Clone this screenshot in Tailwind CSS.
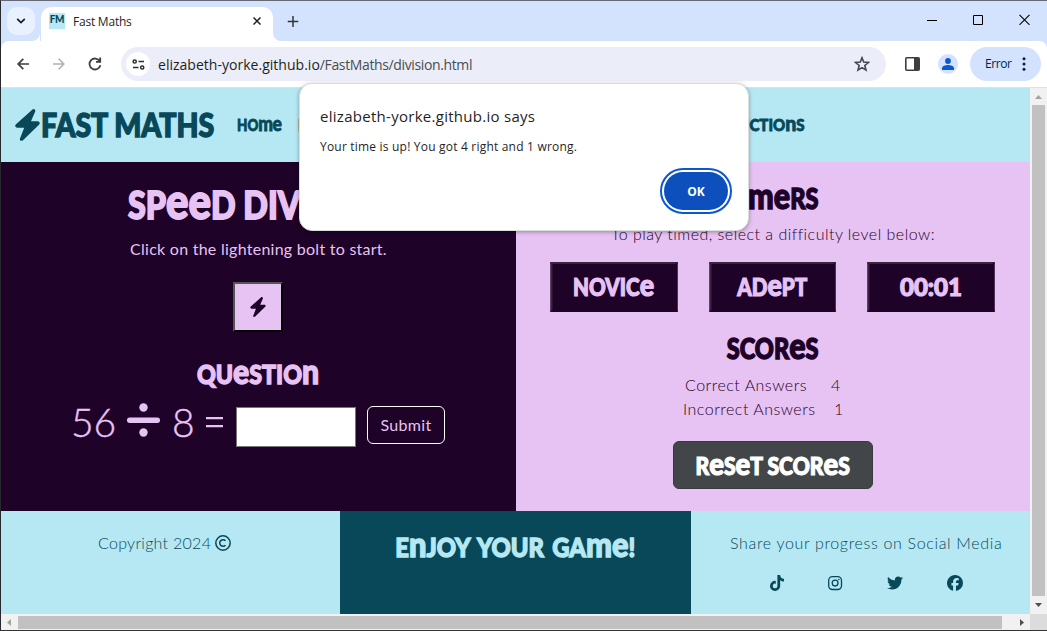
<!DOCTYPE html>
<html lang="en"><head><meta charset="utf-8"><title>Fast Maths</title>
<script src="https://cdn.jsdelivr.net/npm/@tailwindcss/browser@4"></script></head>
<body class="w-[1047px] h-[631px] overflow-hidden bg-white font-['Open_Sans',sans-serif] text-[#1f1f1f]">
<div class="relative w-[1047px] h-[631px] flex flex-col border-t border-t-[#666874] border-l border-l-[#26292e] border-b border-b-[#333] whitespace-nowrap overflow-hidden">
  <!-- Tab strip -->
  <div class="h-10 shrink-0 bg-[#d3e3fd] flex">
    <div class="w-7 h-7 mt-1.5 ml-1.5 rounded-[10px] bg-[#e9f1fe] flex items-center justify-center shrink-0">
      <svg width="10" height="6" viewBox="0 0 10 6" fill="none" stroke="#1f1f1f" stroke-width="1.8"><path d="M1.2 .8 5 4.6 8.8.8"/></svg>
    </div>
    <svg class="w-2 h-2 self-end shrink-0 -ml-1 translate-x-px" viewBox="0 0 8 8"><path d="M8 0v8H0a8 8 0 0 0 8-8" fill="#fff"/></svg>
    <div class="w-[232px] -ml-px translate-x-[3px] h-[34px] mt-1.5 rounded-t-[10px] bg-white flex items-center shrink-0">
      <div class="w-4 h-4 ml-2 bg-[#b6e8f5] mb-1.5 flex items-center justify-center font-['Lato',sans-serif] font-black text-[11px] tracking-[-0.5px] text-[#084859]"><span class="-mt-1 scale-x-90">FM</span></div>
      <span class="ml-2 mb-[5px] text-[12px] tracking-[-0.22px]">Fast Maths</span>
      <svg class="ml-auto mr-3 mb-1.5" width="8" height="8" viewBox="0 0 8 8" stroke="#1f1f1f" stroke-width="1.5"><path d="M.5.5l7 7M7.500.5l-7 7"/></svg>
    </div>
    <svg class="w-2 h-2 self-end shrink-0 translate-x-[3px]" viewBox="0 0 8 8"><path d="M0 0v8h8a8 8 0 0 1-8-8" fill="#fff"/></svg>
    <svg class="ml-[10px] mt-[15px] -translate-x-[0.5px]" width="11" height="11" viewBox="0 0 11 11" stroke="#333" stroke-width="1.5"><path d="M5.500 0v11M0 5.500h11"/></svg>
    <div class="ml-auto mr-[17px] mt-[13px] flex gap-9">
      <svg width="10" height="11" viewBox="0 0 10 11" stroke="#000"><path d="M0 6.500h10"/></svg>
      <svg width="10" height="11" viewBox="0 0 10 11" stroke="#000" fill="none"><path d="M.5 1.500h9v9h-9z"/></svg>
      <svg width="11" height="11" viewBox="0 0 11 11" stroke="#000" stroke-width="1.100"><path d="M.5.8l10 10M10.500.8l-10 10"/></svg>
    </div>
  </div>
  <!-- Toolbar -->
  <div class="bg-[#d3e3fd] shrink-0">
  <div class="h-[47px] bg-white rounded-t-[8px] border-b border-[#dfe1e5] flex items-center">
    <svg class="ml-4" width="12" height="12" viewBox="0 0 12 12" fill="none" stroke="#3c3f42" stroke-width="1.700"><path d="M12 6H1.200M6.300.8 1.200 6l5.100 5.200"/></svg>
    <svg class="ml-6" width="12" height="12" viewBox="0 0 12 12" fill="none" stroke="#b0b2b5" stroke-width="1.600"><path d="M0 6h10.800M5.700.8 10.800 6l-5.100 5.200"/></svg>
    <svg class="ml-[23px]" width="14" height="14" viewBox="0 0 14 14" fill="none" stroke="#3c3f42" stroke-width="1.800"><path d="M11.800 4.200A5.500 5.500 0 1 0 12.400 8.300M12.200.5v4.300H8"/></svg>
    <div class="ml-[19px] w-[765px] h-[34px] rounded-full bg-[#ebeef8] flex items-center shrink-0">
      <div class="ml-[5px] w-6 h-6 rounded-full bg-white flex items-center justify-center">
        <svg width="13" height="11" viewBox="0 0 13 11" fill="none" stroke="#2d2f31" stroke-width="1.500"><circle cx="2.700" cy="2.500" r="1.600"/><path d="M6.500 2.500H12M1 8.500h5.500"/><circle cx="10.200" cy="8.500" r="1.600"/></svg>
      </div>
      <span class="ml-2 text-[14px] tracking-[-0.37px] [word-spacing:0]"><span class="tracking-[0.02px]">elizabeth-yorke.github.io</span><span class="text-[#4a4d51]">/FastMaths/division.html</span></span>
      <svg class="ml-auto mr-4" width="16" height="16" viewBox="0 0 16 16" fill="none" stroke="#44474a" stroke-width="1.600"><path d="m8 1.800 1.700 4.300 4.700.4-3.600 3 1.200 4.600-4-2.500-4 2.500 1.200-4.600-3.600-3 4.700-.4z"/></svg>
    </div>
    <svg class="ml-[19px] shrink-0" width="15" height="14" viewBox="0 0 15 14"><rect x=".8" y=".8" width="13.400" height="12.400" rx="1" fill="none" stroke="#3c3f42" stroke-width="1.600"/><path d="M9 1h5v12H9z" fill="#3c3f42"/></svg>
    <div class="ml-[18px] w-5 h-5 rounded-full bg-[#d3e3fd] flex items-center justify-center shrink-0">
      <svg width="12" height="12" viewBox="0 0 12 12" fill="#0b57d0"><circle cx="6" cy="3" r="2.900"/><path d="M0 12v-1.800C0 8 3.500 7 6 7s6 1 6 3.200V12z"/></svg>
    </div>
    <div class="ml-3 w-[71px] h-[34px] rounded-full bg-[#d3e3fd] flex items-center shrink-0 text-[12px] text-[#041e49]">
      <span class="ml-[15px] tracking-[-0.4px]">Error</span>
      <svg class="ml-auto mr-[15px]" width="4" height="14" viewBox="0 0 4 14" fill="#041e49"><circle cx="2" cy="1.800" r="1.500"/><circle cx="2" cy="7" r="1.500"/><circle cx="2" cy="12.200" r="1.500"/></svg>
    </div>
  </div></div>
  <!-- Page viewport -->
  <div class="flex h-[526px] shrink-0">
    <div class="w-[1029px] shrink-0 font-['Lato',sans-serif] font-light">
      <header class="h-[74px] bg-[#b6e8f4] text-[#084859] flex items-center font-black">
        <svg class="ml-[14px] shrink-0" width="25" height="32" viewBox="0 0 25 32" fill="#084859"><path d="M17.500.4c1.600-.9 3.300.5 2.700 2.200L16 12.200h6.600c2 0 2.800 2.200 1.400 3.500L8 31.200c-1.700 1.500-3.800.2-3-1.800L9.200 18.800H2.400C.3 18.800-.5 16.600 1 15.200z"/></svg>
        <span class="ml-px w-[172px] shrink-0 text-[32px]"><span class="inline-block origin-left scale-x-[0.89] [-webkit-text-stroke:1.4px]">FAST MATHS</span></span>
        <nav class="ml-[24px] w-[568px] flex justify-between text-[16px] uppercase leading-none [-webkit-text-stroke:0.8px]">
          <span class="flex"><span class="w-[61px]"><span class="inline-block origin-left scale-x-[0.84]">Ho<i class="not-italic normal-case text-[1.3em] leading-[0] tracking-[-0.5px]">me</i></span></span><span>Division</span></span>
          <span class="inline-block origin-right scale-x-[0.94]">Instructio<i class="not-italic normal-case text-[1.3em] leading-[0]">n</i>s</span>
        </nav>
      </header>
      <main class="h-[349px] flex">
        <section class="w-[515px] bg-[#1e0228] text-[#e7c3f3] flex flex-col items-center">
          <h1 class="mt-[21px] h-[42px] leading-[42px] font-black text-[38px] uppercase scale-x-[0.85] [-webkit-text-stroke:1.8px]">Sp<i class="not-italic normal-case text-[1.3em] leading-[0]">ee</i>d Division</h1>
          <p class="mt-[12px] h-6 leading-6 text-[16px] font-normal tracking-[0.26px]">Click on the lightening bolt to start.</p>
          <div class="mt-[21px] -translate-x-px w-[50px] h-[50px] border-2 border-t-[#555] border-l-[#555] border-b-black border-r-black bg-[#e7c3f3] flex items-center justify-center">
            <svg width="16" height="20" viewBox="0 0 25 32" fill="#1e0228"><path d="M17.500.4c1.600-.9 3.300.5 2.700 2.200L16 12.200h6.600c2 0 2.800 2.200 1.400 3.500L8 31.200c-1.700 1.500-3.800.2-3-1.800L9.200 18.800H2.400C.3 18.800-.5 16.600 1 15.200z"/></svg>
          </div>
          <h2 class="mt-[26px] h-8 leading-8 font-black text-[27px] uppercase scale-x-[0.86] [-webkit-text-stroke:1.4px]">Qu<i class="not-italic normal-case text-[1.3em] leading-[0]">e</i>stio<i class="not-italic normal-case text-[1.3em] leading-[0]">n</i></h2>
          <div class="mt-[17px] self-start ml-[70px] h-10 flex text-[39px] leading-[30px] [-webkit-text-stroke:0.4px]">
            <span class="w-[56px]">56</span>
            <svg class="-mt-1" width="33" height="34" viewBox="0 0 33 34" fill="#e7c3f3"><circle cx="16.500" cy="4.500" r="4.200"/><rect y="14.500" width="33" height="5.500" rx="2.700"/><circle cx="16.500" cy="29.500" r="4.200"/></svg>
            <span class="ml-[12px] w-[33px]">8</span>
            <svg class="mt-[9px]" width="19" height="13" viewBox="0 0 19 13" fill="#e7c3f3"><path d="M1 1h17v2.200H1zM1 9h17v2.200H1z"/></svg>
            <div class="ml-3 w-[120px] h-10 bg-white border border-[#767676]"></div>
            <div class="ml-[11px] -mt-px w-[78px] h-[38px] rounded-md border border-white text-[16px] leading-9 font-normal text-center tracking-[0.3px] [-webkit-text-stroke:0px]">Submit</div>
          </div>
        </section>
        <section class="w-[514px] bg-[#e7c3f3] text-[#1e0228] flex flex-col items-center">
          <h2 class="mt-5 h-8 leading-8 font-black text-[28px] uppercase scale-x-[0.84] [-webkit-text-stroke:1.4px]">Ti<i class="not-italic normal-case text-[1.3em] leading-[0]">me</i>rs</h2>
          <p class="mt-[8px] h-6 leading-6 text-[16px] tracking-[0.48px]">To play timed, select a difficulty level below:</p>
          <div class="mt-4 -translate-x-[0.5px] flex gap-[32px] h-[50px] font-black text-[24px] uppercase text-[#e7c3f3] [-webkit-text-stroke:1.2px]">
            <div class="w-[126.500px] border-2 border-t-[#3a233f] border-l-[#3a233f] border-r-[#1e0228] border-b-[#1e0228] bg-[#1e0228] text-center leading-[46px]"><span class="inline-block scale-x-[0.86]">Novic<i class="not-italic normal-case text-[1.3em] leading-[0]">e</i></span></div>
            <div class="w-[126.500px] border-2 border-t-[#3a233f] border-l-[#3a233f] border-r-[#1e0228] border-b-[#1e0228] bg-[#1e0228] text-center leading-[46px]"><span class="inline-block scale-x-[0.86]">Ad<i class="not-italic normal-case text-[1.3em] leading-[0]">e</i>pt</span></div>
            <div class="w-[126.500px] border-2 border-t-[#3a233f] border-l-[#3a233f] border-r-[#1e0228] border-b-[#1e0228] bg-[#1e0228] text-center leading-[46px]">00:01</div>
          </div>
          <h2 class="mt-5 h-8 leading-8 font-black text-[28px] uppercase scale-x-[0.84] [-webkit-text-stroke:1.4px]">Scor<i class="not-italic normal-case text-[1.3em] leading-[0]">e</i>s</h2>
          <div class="mt-[9px] h-6 leading-6 text-[16px] tracking-[0.5px] self-start ml-[169px] flex"><span class="w-[146px]">Correct Answers</span><span>4</span></div>
          <div class="h-6 leading-6 text-[16px] tracking-[0.5px] self-start ml-[167px] flex"><span class="w-[151px]">Incorrect Answers</span><span>1</span></div>
          <div class="mt-[20px] w-[200px] h-12 rounded-md bg-[#424649] border border-[#373b3e] text-white text-center leading-[47px] font-black text-[24px] uppercase [-webkit-text-stroke:1.2px]"><span class="inline-block scale-x-[0.88]">R<i class="not-italic normal-case text-[1.3em] leading-[0]">e</i>s<i class="not-italic normal-case text-[1.3em] leading-[0]">e</i>t Scor<i class="not-italic normal-case text-[1.3em] leading-[0]">e</i>s</span></div>
        </section>
      </main>
      <footer class="h-[103px] flex bg-[#b6e8f4] text-[#084859]">
        <div class="w-[339px] flex pt-5 pl-[97px] text-[16px] leading-6 tracking-[0.28px]"><span class="w-[117px]">Copyright 2024</span>
          <svg class="mt-1" width="16" height="16" viewBox="0 0 16 16" fill="none" stroke="#084859" stroke-width="1.500"><circle cx="8" cy="8" r="7.200"/><path d="M10.500 5.800a3.300 3.300 0 1 0 0 4.400"/></svg></div>
        <div class="w-[351px] bg-[#084859] text-[#b6e8f4] text-center pt-5 leading-8 font-black text-[27px] uppercase [-webkit-text-stroke:1.4px]"><span class="inline-block scale-x-[0.88] [word-spacing:3px]">E<i class="not-italic normal-case text-[1.3em] leading-[0]">n</i>joy your Ga<i class="not-italic normal-case text-[1.3em] leading-[0]">me</i>!</span></div>
        <div class="w-[339px] pt-5 pl-[39px]">
          <p class="text-[16px] leading-6 tracking-[0.66px]">Share your progress on Social Media</p>
          <div class="mt-5 ml-10 flex h-4">
            <svg width="14" height="16" viewBox="0 0 448 512" fill="#084859"><path d="M448 209.900a210.100 210.100 0 0 1-122.800-39.300v178.800A162.600 162.600 0 1 1 185 188.300v89.900a74.600 74.600 0 1 0 52.200 71.200V0h88a121.200 121.200 0 0 0 1.900 22.200 122.200 122.200 0 0 0 53.900 80.200 121.400 121.400 0 0 0 67 20.100z"/></svg>
            <svg class="ml-[43px]" width="16" height="16" viewBox="0 0 16 16" fill="none" stroke="#084859" stroke-width="1.300"><rect x="1.700" y="1.700" width="12.800" height="12.800" rx="3.700"/><circle cx="8.100" cy="8.100" r="2.900"/><circle cx="11.800" cy="4.400" r=".5" fill="#084859" stroke-width=".6"/></svg>
            <svg class="ml-11" width="16" height="16" viewBox="0 0 512 512" fill="#084859"><path d="M459.400 151.700c.3 4.500.3 9.100.3 13.600 0 138.700-105.600 298.600-298.600 298.600-59.500 0-114.700-17.200-161.100-47.100 8.400 1 16.600 1.300 25.300 1.300 49.100 0 94.200-16.600 130.300-44.800-46.100-1-84.800-31.200-98.100-72.800 6.500 1 13 1.600 19.800 1.600 9.400 0 18.800-1.300 27.600-3.600-48.100-9.700-84.100-52-84.100-103v-1.300c14 7.800 30.200 12.700 47.400 13.300-28.300-18.800-46.800-51-46.800-87.400 0-19.500 5.200-37.400 14.300-53 51.700 63.700 129.300 105.300 216.400 109.800-1.600-7.800-2.600-15.900-2.600-24 0-57.800 46.800-104.900 104.900-104.900 30.200 0 57.500 12.700 76.700 33.100 23.700-4.500 46.500-13.300 66.600-25.300-7.800 24.400-24.400 44.800-46.100 57.800 21.100-2.300 41.600-8.100 60.400-16.200-14.300 20.800-32.200 39.300-52.600 54.300z"/></svg>
            <svg class="ml-11" width="16" height="16" viewBox="0 0 512 512" fill="#084859"><path d="M512 256a256 256 0 1 0-317.800 248.400V334.200h-52.800V256h52.800v-33.700c0-87.100 39.400-127.500 125-127.500 16.200 0 44.200 3.200 55.700 6.400V172c-6-.6-16.500-1-29.600-1-42 0-58.200 15.900-58.200 57.200V256h83.600l-14.400 78.200H287v175.900A256 256 0 0 0 512 256z"/></svg>
          </div>
        </div>
      </footer>
    </div>
    <div class="w-[17px] shrink-0 bg-[#f1f1f1] flex flex-col items-center">
      <svg class="mt-[7px]" width="7" height="4" viewBox="0 0 7 4" fill="#a3a3a3"><path d="M3.500 0 7 4H0z"/></svg>
      <div class="mt-[6px] w-[13px] h-[491px] bg-[#c1c1c1]"></div>
      <svg class="mt-[7px]" width="7" height="4" viewBox="0 0 7 4" fill="#505050"><path d="M3.500 4 7 0H0z"/></svg>
    </div>
  </div>
  <div class="h-4 shrink-0 flex items-center bg-[#f1f1f1]">
    <svg class="ml-[6px]" width="4" height="7" viewBox="0 0 4 7" fill="#a3a3a3"><path d="M0 3.500 4 0v7z"/></svg>
    <div class="ml-[7px] w-[984px] h-[13px] bg-[#c1c1c1]"></div>
    <svg class="ml-[18px]" width="4" height="7" viewBox="0 0 4 7" fill="#505050"><path d="M4 3.500 0 0v7z"/></svg>
    <div class="ml-auto w-[17px] h-4 bg-[#dcdcdc]"></div>
  </div>
  <!-- Alert dialog -->
  <div class="absolute left-[298px] top-[82px] w-[450px] h-[148px] bg-white rounded-[13px] border border-[#dcdfe0] shadow-[0_1px_4px_rgba(0,0,0,0.35)] flex flex-col pl-5 pr-4">
    <div class="mt-[20px] h-6 leading-6 text-[15px] font-medium tracking-[0.28px]">elizabeth-yorke.github.io says</div>
    <div class="mt-[9px] h-5 leading-5 text-[12px] tracking-[0.2px]">Your time is up! You got 4 right and 1 wrong.</div>
    <div class="mt-[11px] self-end w-[72px] h-[46px] rounded-full border-2 border-[#0b57d0] p-0.5">
      <div class="h-full rounded-full bg-[#0d50bd] text-white text-[12px] font-bold flex items-center justify-center pt-px">OK</div>
    </div>
  </div>
</div>
</body></html>
